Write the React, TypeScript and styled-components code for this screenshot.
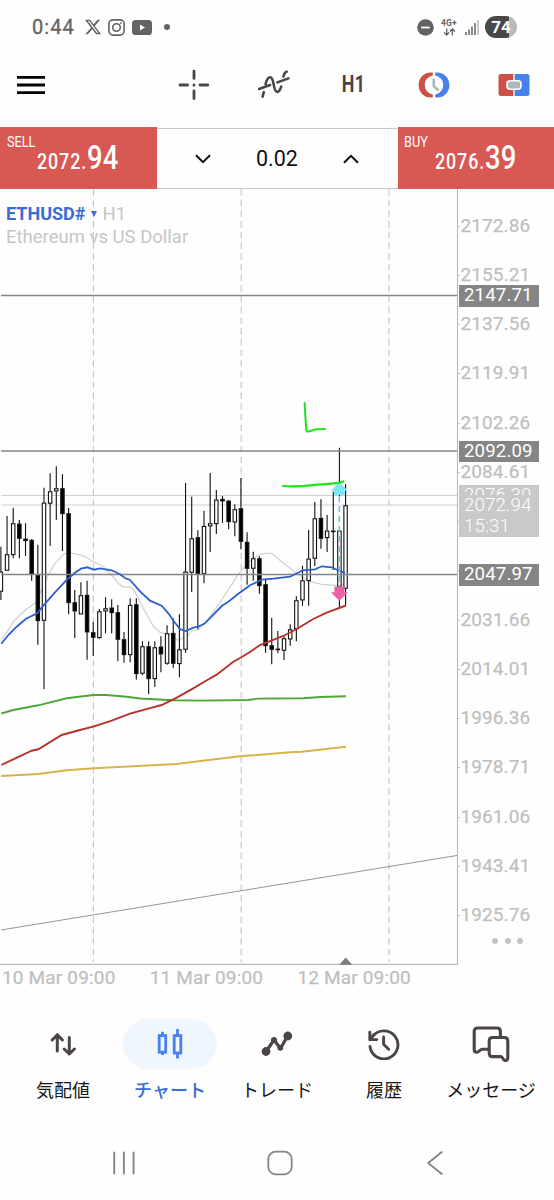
import React from "react";
import styled, { createGlobalStyle } from "styled-components";
import { FaXTwitter } from "react-icons/fa6";

const GlobalStyle = createGlobalStyle`
  * { box-sizing: border-box; }
  body { margin: 0; background: #fefefe; font-family: Roboto, "Noto Sans CJK JP", sans-serif; }
`;

const Screen = styled.div`
  width: 554px;
  height: 1200px;
  display: flex;
  flex-direction: column;
  background: #fefefe;
  overflow: hidden;
`;

const StatusBar = styled.header`
  height: 54px;
  display: flex;
  justify-content: space-between;
  align-items: center;
  padding: 0 37px 0 32px;
  color: #636363;
`;
const StatusGroup = styled.div<{ $gap: number }>`
  display: flex;
  align-items: center;
  gap: ${(p) => p.$gap}px;
`;
const Clock = styled.span`
  font-size: 20px;
  letter-spacing: 1.1px;
  width: 45px;
  -webkit-text-stroke: 0.3px #636363;
`;
const Network = styled.div`
  display: flex;
  flex-direction: column;
  align-items: center;
  width: 18px;
  font-size: 8.5px;
  font-weight: 700;
  line-height: 9px;
  letter-spacing: 0.2px;
`;
const Battery = styled.div`
  width: 32px;
  height: 22px;
  border-radius: 11px;
  background: linear-gradient(90deg, #484848 74%, #b9b9b9 74%);
  color: #fff;
  font-size: 17px;
  font-weight: 700;
  line-height: 23px;
  text-align: center;
`;

const Toolbar = styled.div`
  height: 73px;
  display: flex;
  align-items: center;
  justify-content: space-between;
  padding: 0 0 12px 17px;
`;
const ToolGroup = styled.div`
  display: flex;
`;
const Tool = styled.button`
  width: 80px;
  height: 40px;
  padding: 0;
  border: 0;
  background: none;
  font-family: inherit;
  display: flex;
  align-items: center;
  justify-content: center;
`;
const Narrow = styled.span<{ $size: number; $weight?: number; $scale?: number; $origin?: string }>`
  display: inline-block;
  font-size: ${(p) => p.$size}px;
  font-weight: ${(p) => p.$weight ?? 400};
  line-height: 1;
  transform: scaleX(${(p) => p.$scale ?? 0.85});
  transform-origin: ${(p) => p.$origin ?? "center"};
`;
const Timeframe = styled(Narrow)`
  color: #4b4543;
  letter-spacing: 0.6px;
`;

const TradePanel = styled.section`
  height: 62px;
  display: grid;
  grid-template-columns: 156.5px 1fr 156.5px;
  border-bottom: 1px solid #c9c9c9;
`;
const QuoteButton = styled.button`
  height: 62px;
  padding: 0;
  border: 0;
  background: #d85853;
  color: #fff;
  font-family: inherit;
  text-align: left;
  display: flex;
  flex-direction: column;
`;
const QuoteSide = styled(Narrow)`
  margin: 7.5px 0 0 6.5px;
`;
const Quote = styled.div`
  display: flex;
  align-items: baseline;
  margin: -8.5px 0 0 37px;
  white-space: nowrap;
  transform: scaleX(0.83);
  transform-origin: left;
  font-weight: 500;
  font-size: 21.5px;
  letter-spacing: 1.1px;
  line-height: 32px;
`;
const QuotePips = styled.span`
  font-size: 33px;
  letter-spacing: 0;
`;
const Volume = styled.div`
  border-top: 1px solid #c9c9c9;
  margin-top: 0.5px;
  display: flex;
  align-items: center;
  justify-content: space-between;
  padding: 0 38px;
  font-size: 21.5px;
  color: #111;
`;

const ChartArea = styled.main`
  position: relative;
  height: 811px;
  display: grid;
  grid-template-columns: 458px 96px;
  grid-template-rows: 776px 35px;
`;
const Plot = styled.svg`
  display: block;
`;
const SymbolInfo = styled.div`
  position: absolute;
  left: 6px;
  top: 13px;
  font-size: 18.5px;
  line-height: 23px;
  color: #c6c6c6;
`;
const SymbolName = styled.span`
  color: #3a6cd6;
  font-weight: 700;
  font-size: 18px;
`;
const Caret = styled.span`
  display: inline-block;
  border: 3.2px solid transparent;
  border-top: 6px solid #3a6cd6;
  border-bottom: 0;
  margin: 0 5px 3px 6px;
`;
const PriceAxis = styled.div`
  position: relative;
  display: flex;
  flex-direction: column;
  padding-top: 24.5px;
`;
const PriceLabel = styled.div`
  height: 49.28px;
  flex: none;
  font-size: 19px;
  line-height: 24px;
  letter-spacing: 0.1px;
  color: #bfbfbf;
  -webkit-text-stroke: 0.25px #bfbfbf;
  display: flex;
  &::before {
    content: "";
    width: 2px;
    height: 1px;
    margin-top: 12px;
    margin-right: 0.5px;
    background: #c4c4c4;
  }
  &:last-of-type {
    height: 24px;
  }
`;
const PriceTag = styled.div<{ $top: number; $height?: number; $light?: boolean }>`
  position: absolute;
  left: 1px;
  top: ${(p) => p.$top}px;
  width: 80px;
  height: ${(p) => p.$height ?? 21.5}px;
  padding-left: 5px;
  overflow: hidden;
  background: ${(p) => (p.$light ? "#c9c9c9" : "#858585")};
  color: #fff;
  font-size: 18.7px;
  font-weight: ${(p) => (p.$light ? 300 : 400)};
  line-height: 21.5px;
  letter-spacing: 0.1px;
`;
const More = styled.div`
  position: absolute;
  right: 31px;
  bottom: 21px;
  display: flex;
  gap: 6.5px;
`;
const Dot = styled.i<{ $size: number; $color: string }>`
  width: ${(p) => p.$size}px;
  height: ${(p) => p.$size}px;
  border-radius: 50%;
  background: ${(p) => p.$color};
`;
const TimeAxis = styled.div`
  grid-column: 1 / -1;
  display: flex;
  padding-left: 2px;
  font-size: 19px;
  line-height: 26px;
  color: #bfbfbf;
  -webkit-text-stroke: 0.25px #bfbfbf;
`;
const TimeLabel = styled.span`
  width: 147.7px;
  letter-spacing: 0.17px;
`;

const BottomNav = styled.nav`
  height: 127px;
  padding: 19px 9.5px 0;
  display: grid;
  grid-template-columns: repeat(5, 107px);
`;
const NavItem = styled.a<{ $active?: boolean }>`
  display: flex;
  flex-direction: column;
  align-items: center;
  font-size: 18px;
  line-height: 24px;
  gap: 9.5px;
  white-space: nowrap;
  color: ${(p) => (p.$active ? "#3a6cd6" : "#161616")};
  font-weight: ${(p) => (p.$active ? 500 : 400)};
`;
const Pill = styled.span<{ $active?: boolean }>`
  width: 94px;
  height: 50px;
  border-radius: 25px;
  display: flex;
  align-items: center;
  justify-content: center;
  background: ${(p) => (p.$active ? "#eff6fd" : "transparent")};
`;
const SystemBar = styled.footer`
  height: 73px;
  display: grid;
  grid-template-columns: 155px 156px 155px;
  justify-content: center;
  justify-items: center;
  align-items: center;
  padding: 0 0 1px 5px;
`;

const SPACING = 6.155;
const ORIGIN = 0.9;

// high, body top, body bottom, low, filled
type Candle = [number, number, number, number, 0 | 1];
const candles: Candle[] = [
  [320, 395, 455, 480, 0], [228, 343, 392, 392, 0], [203, 250, 345, 355, 0], [240, 251, 296, 355, 1],
  [250, 296, 303, 348, 1], [297, 300, 402, 422, 1], [314, 405, 543, 614, 1], [143, 188, 542, 748, 0],
  [100, 154, 191, 318, 0], [79, 145, 154, 240, 0], [103, 145, 222, 333, 1], [204, 220, 489, 523, 1],
  [450, 487, 514, 594, 1], [427, 466, 523, 523, 0], [422, 465, 577, 659, 1], [546, 577, 593, 648, 1],
  [507, 514, 594, 596, 0], [472, 505, 514, 580, 0], [478, 503, 519, 580, 1], [495, 517, 599, 664, 1],
  [576, 598, 645, 668, 1], [475, 495, 645, 667, 0], [475, 493, 702, 719, 1], [604, 619, 701, 706, 0],
  [604, 619, 717, 762, 1], [604, 622, 717, 741, 0], [589, 620, 643, 697, 1], [556, 580, 671, 674, 0],
  [535, 579, 671, 684, 1], [523, 628, 672, 712, 0], [129, 395, 629, 638, 0], [170, 295, 398, 456, 0],
  [271, 292, 402, 568, 1], [212, 258, 402, 430, 0], [99, 250, 259, 336, 0], [150, 179, 252, 282, 0],
  [168, 177, 184, 248, 1], [181, 182, 246, 268, 1], [193, 208, 247, 289, 0], [114, 205, 305, 328, 1],
  [277, 306, 386, 434, 1], [335, 355, 386, 422, 0], [349, 355, 438, 461, 1], [420, 433, 618, 638, 1],
  [533, 616, 629, 673, 1], [573, 626, 630, 640, 1], [588, 595, 632, 660, 0], [553, 568, 598, 617, 0],
  [469, 481, 567, 604, 0], [377, 421, 481, 497, 0], [270, 356, 423, 497, 0], [185, 235, 356, 378, 0],
  [178, 234, 296, 326, 1], [225, 272, 294, 336, 0], [155, 272, 275, 390, 1], [23, 272, 440, 505, 0],
  [132, 196, 446, 495, 0],
];
const toY = (v: number) => 440 + v / 3;

const lightAverage =
  "1.3,639.3 7.3,631.7 13.3,621.7 20,615 26.7,609 35,603.3 40,593.3 48.3,575 55,563.3 63.3,554.3 68.3,552.7 78.3,554.3 85,556.7 93.3,561.7 103.3,566.7 111.7,575 119,584 124,587.3 130,586.7 135,591.7 143.3,608.3 153.3,626 160,632.3 170,634.3 178.3,640.3 186.7,636.7 191.7,630.7 198.3,630 210,616.7 221.7,600 236.7,576.7 245,566 253.3,558.3 260,554.3 266.7,553.3 272.3,553.3 278.3,559 290,568.3 301.7,576.7 310,581.7 321.7,584.3 335,585.3 346,584";
const blueAverage =
  "1.3,643.7 8.3,635 16.7,626.7 26,618.7 37.3,613.3 43.3,605.7 55,592.3 66.7,580 75,572.7 81,568.7 87.3,567.3 94,569.7 100,568.3 111.7,570.3 120,574.3 125,578 130,580 140,591.3 150,600.7 161.7,605.7 168.3,613.3 175,622.7 180,629 185.7,631 193.3,627.7 198.3,626.7 205,623.3 221.7,606 228.3,601.7 236.7,595 250,585.3 261.7,579.7 273.3,578.7 290,576.7 302.7,570.3 315,569.3 321.7,566.3 331.7,567.3 336.7,569.7 345,573";
const redAverage =
  "1.3,765 31.7,750.7 38.3,749.3 61.7,735 80,730 94,726.3 111.7,720.7 130,713.7 148.3,708.7 161.7,705 176.7,697.7 193.3,688.3 207.3,680 216.7,674.7 233.3,661.7 240,658 250,652 260,645 283.3,636 296.7,629 313.3,619 326.7,612.7 346,605.5";
const greenAverage =
  "1.3,713.5 13.3,710 38.3,705.3 66.7,698.3 93.3,695 106.7,695 126.7,696.7 140,698.5 173.3,700.2 200,700.6 248,700 258,698.6 303.3,698.3 320,697 346,696.3";
const yellowAverage =
  "1.3,776 38.3,774 66.7,770.3 94,768.3 176.7,764 206.7,760.3 240,756.3 290,752.3 301.7,751.7 346,746.8";

const prices = [
  "2172.86", "2155.21", "2137.56", "2119.91", "2102.26", "2084.61", "", "", "2031.66", "2014.01",
  "1996.36", "1978.71", "1961.06", "1943.41", "1925.76",
];

function PriceChart() {
  return (
    <Plot width="458" height="776" viewBox="0 189 458 776" fill="none">
      {[93.4, 241.2, 389].map((x) => (
        <path key={x} d={`M${x} 189V962`} stroke="#c9c9c9" strokeWidth="1.2" strokeDasharray="6.6 4.1" />
      ))}
      <path d="M1 495.5H458M1 505H458" stroke="#cfcfcf" strokeWidth="1.1" />
      <polyline points={lightAverage} stroke="#d2d2d2" strokeWidth="1.3" />
      {candles.map(([high, top, bottom, low, filled], i) => {
        const x = ORIGIN + i * SPACING;
        return (
          <g key={i} stroke="#111" strokeWidth="1.1">
            <path d={`M${x} ${toY(high)}V${toY(top)}M${x} ${toY(bottom)}V${toY(low)}`} />
            <rect
              x={x - 1.7}
              y={toY(top) + 0.4}
              width="3.4"
              height={Math.max(0.6, (bottom - top) / 3 - 0.8)}
              fill={filled ? "#000" : "#fff"}
            />
          </g>
        );
      })}
      <path d="M1 295.5H458M1 451H458M1 574.6H458" stroke="#858585" strokeWidth="1.5" />
      <path d="M1 930L458 855.3" stroke="#8a8a8a" strokeWidth="0.9" />
      <polyline points={yellowAverage} stroke="#d9b24a" strokeWidth="1.9" />
      <polyline points={greenAverage} stroke="#4fa53a" strokeWidth="1.9" />
      <polyline points={redAverage} stroke="#b5332b" strokeWidth="1.9" />
      <polyline points={blueAverage} stroke="#2c5fd0" strokeWidth="1.8" />
      <path d="M339.4 496V530" stroke="#fefefe" strokeWidth="2" />
      <path d="M339.4 496V587" stroke="#4fd6dd" strokeWidth="1.5" strokeDasharray="6 4" />
      <path d="M339.4 482L348 491H344.6V495H334.2V491H330.8Z" fill="#7be6f4" />
      <path d="M334.4 586.6H344.4V592.2H348L339.4 600.8L330.8 592.2H334.4Z" fill="#ea62a6" />
      <path
        d="M304.7 403C304.8 412 306 423 306.3 430.5C306.8 433 311 430.5 316 429.2L325 429"
        stroke="#1fe51f" strokeWidth="2" strokeLinecap="round" strokeLinejoin="round"
      />
      <path
        d="M283 486C297 487.3 308 485.6 317 484.7S337 484.2 343.3 481.5"
        stroke="#1fe51f" strokeWidth="2.2" strokeLinecap="round"
      />
      <path d="M0 964.3H457.6V189" stroke="#b9b9b9" strokeWidth="1.3" />
      <path d="M339.3 964.8L345.7 957.6L352.3 964.8Z" fill="#7d7d7d" />
    </Plot>
  );
}

export default function App() {
  return (
    <>
      <GlobalStyle />
      <Screen>
        <StatusBar>
          <StatusGroup $gap={6.5}>
            <Clock>0:44</Clock>
            <FaXTwitter size={18} />
            <svg width="17" height="17" viewBox="0 0 17 17" fill="none" stroke="#636363" strokeWidth="1.6">
              <rect x=".9" y=".9" width="15.2" height="15.2" rx="4" />
              <circle cx="8.5" cy="8.5" r="3.8" />
              <circle cx="12.8" cy="4.2" r=".6" fill="#636363" strokeWidth=".6" />
            </svg>
            <svg width="20" height="15" viewBox="0 0 20 15">
              <rect width="20" height="15" rx="3.6" fill="#636363" />
              <path d="M8 4.6V10.4L13 7.5Z" fill="#fff" />
            </svg>
            <svg width="18" height="6" viewBox="0 0 18 6">
              <circle cx="9" cy="3" r="3" fill="#636363" />
            </svg>
          </StatusGroup>
          <StatusGroup $gap={6.5}>
            <svg width="17" height="17" viewBox="0 0 17 17">
              <circle cx="8.5" cy="8.5" r="8.3" fill="#636363" />
              <path d="M4.2 8.5H12.8" stroke="#fff" strokeWidth="1.8" />
            </svg>
            <Network>
              4G+
              <svg width="13" height="8" viewBox="0 0 13 8" fill="none" stroke="#636363" strokeWidth="1.3">
                <path d="M3.7 .5V7M1 4.4L3.7 7L6.2 4.4M9.3 7.5V1M6.8 3.5L9.3 1L12 3.5" />
              </svg>
            </Network>
            <svg width="14" height="15" viewBox="0 0 14 15" fill="none" stroke="#636363" strokeWidth="1.5">
              <path d="M1 12V15M4 9.5V15M7 6.5V15M10 3V15" />
              <path d="M13 0V15" stroke="#bbb" />
            </svg>
            <Battery>74</Battery>
          </StatusGroup>
        </StatusBar>

        <Toolbar>
          <svg width="28" height="20" viewBox="0 0 28 20" stroke="#000" strokeWidth="2.8">
            <path d="M0 2.3H28M0 10H28M0 17.6H28" />
          </svg>
          <ToolGroup>
            <Tool>
              <svg width="32" height="32" viewBox="0 0 32 32" stroke="#4b4543" strokeWidth="2.8" strokeLinecap="round">
                <path d="M16 2.2V9.4M16 22V29.6M2 16H9.6M22 16H29.8" />
                <circle cx="16" cy="16" r="1.5" fill="#4b4543" stroke="none" />
              </svg>
            </Tool>
            <Tool>
              <svg width="32" height="30" viewBox="0 0 32 30" fill="none" stroke="#4b4543" strokeWidth="2.6" strokeLinecap="round">
                <path d="M4.6 26.6L5.8 22.2M7.6 14.2C8.8 9 10.3 7.2 12.1 7.2C16.8 7.2 14.6 21.9 19.2 21.9C21.3 21.9 22.2 19.6 23.2 16.6M25.4 6.5C26 4 27 2.2 28.6 1.6" />
                <path d="M1 19L12 15M19.4 12.4L30.4 8.4" />
              </svg>
            </Tool>
            <Tool>
              <Timeframe $size={23.5} $weight={700} $scale={0.76}>H1</Timeframe>
            </Tool>
            <Tool>
              <svg width="32" height="26" viewBox="0 0 32 26" fill="none">
                <path d="M14.8 .4H13C5.8 .4 .6 5.9 .6 13S5.8 25.6 13 25.6H14.8V22.4C10 21.4 6.8 17.8 6.8 13S10 4.6 14.8 3.6Z" fill="#ca5144" />
                <path d="M17.2 .4H19C26.2 .4 31.4 5.9 31.4 13S26.2 25.6 19 25.6H17.2V22.4C22 21.4 25.2 17.8 25.2 13S22 4.6 17.2 3.6Z" fill="#4881ee" />
                <path d="M15.8 6.7V14.2L20.6 18.4" stroke="#adb8bf" strokeWidth="2.7" />
              </svg>
            </Tool>
            <Tool>
              <svg width="32" height="22" viewBox="0 0 32 22">
                <path d="M15.3 0H3C1.2 0 .5 1 .5 2.5V19.5C.5 21 1.2 22 3 22H15.3Z" fill="#ca5144" />
                <path d="M16.7 0H29C30.8 0 31.5 1 31.5 2.5V19.5C31.5 21 30.8 22 29 22H16.7Z" fill="#4881ee" />
                <rect x="9" y="6.8" width="14" height="8.4" rx="3.3" fill="#adb8bf" stroke="#fff" strokeWidth="1.6" />
              </svg>
            </Tool>
          </ToolGroup>
        </Toolbar>

        <TradePanel>
          <QuoteButton>
            <QuoteSide $size={15.5} $scale={0.82} $origin="left">SELL</QuoteSide>
            <Quote>2072.<QuotePips>94</QuotePips></Quote>
          </QuoteButton>
          <Volume>
            <svg width="16" height="10" viewBox="0 0 16 10" fill="none" stroke="#111" strokeWidth="2">
              <path d="M1 1.2L8 8.2L15 1.2" />
            </svg>
            0.02
            <svg width="16" height="10" viewBox="0 0 16 10" fill="none" stroke="#111" strokeWidth="2">
              <path d="M1 8.8L8 1.8L15 8.8" />
            </svg>
          </Volume>
          <QuoteButton>
            <QuoteSide $size={15.5} $scale={0.82} $origin="left">BUY</QuoteSide>
            <Quote>2076.<QuotePips>39</QuotePips></Quote>
          </QuoteButton>
        </TradePanel>

        <ChartArea>
          <PriceChart />
          <PriceAxis>
            {prices.map((price, i) => (
              <PriceLabel key={i}>{price}</PriceLabel>
            ))}
            <PriceTag $top={96}>2147.71</PriceTag>
            <PriceTag $top={251.5}>2092.09</PriceTag>
            <PriceTag $top={296} $height={10} $light>2076.39</PriceTag>
            <PriceTag $top={305.5} $height={42.5} $light>2072.94<br />15:31</PriceTag>
            <PriceTag $top={375}>2047.97</PriceTag>
            <More>
              <Dot $size={6} $color="#c4c4c4" />
              <Dot $size={6} $color="#c4c4c4" />
              <Dot $size={6} $color="#c4c4c4" />
            </More>
          </PriceAxis>
          <TimeAxis>
            <TimeLabel>10 Mar 09:00</TimeLabel>
            <TimeLabel>11 Mar 09:00</TimeLabel>
            <TimeLabel>12 Mar 09:00</TimeLabel>
          </TimeAxis>
          <SymbolInfo>
            <SymbolName>ETHUSD#</SymbolName>
            <Caret />
            H1
            <br />
            Ethereum vs US Dollar
          </SymbolInfo>
        </ChartArea>

        <BottomNav>
          <NavItem>
            <Pill>
              <svg width="26" height="24" viewBox="0 0 26 24" fill="none" stroke="#4b4543" strokeWidth="3" strokeLinecap="round" strokeLinejoin="round">
                <path d="M7.3 19V3M2.2 8L7.3 2.7L12.4 8M19.3 5.5V21.5M14.2 17L19.3 22L24.4 17" />
              </svg>
            </Pill>
            気配値
          </NavItem>
          <NavItem $active>
            <Pill $active>
              <svg width="26" height="30" viewBox="0 0 26 30" fill="none" stroke="#4881ee" strokeWidth="2.8">
                <path d="M5.5 2.8V7M5.5 23V26M20.5 0V6M20.5 24V29.5" />
                <rect x="2.2" y="6.6" width="6.5" height="16.6" />
                <rect x="17.2" y="6.6" width="6.6" height="17.4" />
              </svg>
            </Pill>
            チャート
          </NavItem>
          <NavItem>
            <Pill>
              <svg width="32" height="26" viewBox="0 0 32 26" fill="none" stroke="#4b4543" strokeWidth="3.2" strokeLinejoin="round">
                <path d="M5 20.5L13 9L19.5 17.5L26.5 5" />
                <circle cx="5" cy="20.5" r="4.4" fill="#4b4543" stroke="none" />
                <circle cx="13" cy="9" r="3" fill="#4b4543" stroke="none" />
                <circle cx="19.3" cy="17" r="2.8" fill="#4b4543" stroke="none" />
                <circle cx="26.8" cy="5" r="4.4" fill="#4b4543" stroke="none" />
              </svg>
            </Pill>
            トレード
          </NavItem>
          <NavItem>
            <Pill>
              <svg width="32" height="32" viewBox="0 0 32 32" fill="none" stroke="#4b4543" strokeWidth="2.9" strokeLinecap="round" strokeLinejoin="round">
                <path d="M2 18.5A14 14 0 1 0 4.6 8.6M1.8 4.2V11.6H8.8M1.8 11.6L6 6.5M15.6 9V16.3L20.6 21.3" />
              </svg>
            </Pill>
            履歴
          </NavItem>
          <NavItem>
            <Pill>
              <svg width="38" height="36" viewBox="0 0 38 36" fill="none" stroke="#4b4543" strokeWidth="3.1" strokeLinejoin="round">
                <path d="M17 23.2H10.2C8 23.2 7.2 26.2 4.6 26.2C2.8 26.2 2.2 25 2.2 23.4V5.4C2.2 3.2 3.4 2 5.6 2H25C27.2 2 28.4 3.2 28.4 5.4V11" />
                <path d="M20.6 11.5H32.4C34.6 11.5 35.8 12.7 35.8 14.9V31.6C35.8 33.4 35 34.6 33.4 34.6C30.8 34.6 31 30.6 28.8 30.6H20.6C18.4 30.6 17.2 29.4 17.2 27.2V14.9C17.2 12.7 18.4 11.5 20.6 11.5Z" />
              </svg>
            </Pill>
            メッセージ
          </NavItem>
        </BottomNav>

        <SystemBar>
          <svg width="24" height="24" viewBox="0 0 24 24" stroke="#858585" strokeWidth="1.9" strokeLinecap="round">
            <path d="M2.2 1.5V22.5M11.9 1.5V22.5M21.6 1.5V22.5" />
          </svg>
          <svg width="26" height="26" viewBox="0 0 26 26" fill="none" stroke="#858585" strokeWidth="1.8">
            <rect x="1.3" y="1.6" width="23.4" height="22.8" rx="7.5" />
          </svg>
          <svg width="16" height="24" viewBox="0 0 16 24" fill="none" stroke="#858585" strokeWidth="1.8" strokeLinecap="round" strokeLinejoin="round">
            <path d="M14.8 1L1.2 12L14.8 23" />
          </svg>
        </SystemBar>
      </Screen>
    </>
  );
}
